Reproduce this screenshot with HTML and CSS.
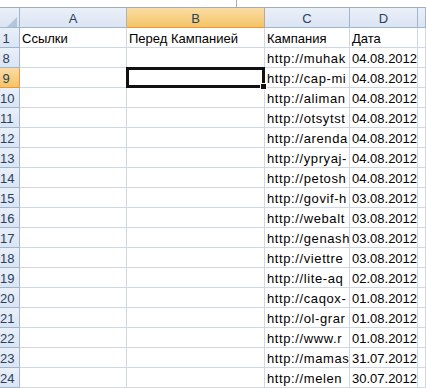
FILE: index.html
```html
<!DOCTYPE html>
<html lang="ru">
<head>
  <meta charset="UTF-8" />
  <title>Лист1</title>
  <link rel="stylesheet" href="styles.css">
</head>
<body>
  <div class="formula-bar"><span class="fx-split"></span></div>

  <div class="sheet">
    <div class="corner"></div>
    <div class="col-head">A</div>
    <div class="col-head active">B</div>
    <div class="col-head">C</div>
    <div class="col-head">D</div>
    <div class="col-head"></div>

    <div class="row-head"><span>1</span></div>
    <div class="cell">Ссылки</div>
    <div class="cell">Перед Кампанией</div>
    <div class="cell">Кампания</div>
    <div class="cell">Дата</div>
    <div class="cell"></div>
  </div>

  <script>
    // only the part of each link that fits in column C is kept
    const rows = [
      [8, "http://muhak", "04.08.2012"],
      [9, "http://cap-mi", "04.08.2012"],
      [10, "http://aliman", "04.08.2012"],
      [11, "http://otsytst", "04.08.2012"],
      [12, "http://arenda", "04.08.2012"],
      [13, "http://ypryaj-", "04.08.2012"],
      [14, "http://petosh", "04.08.2012"],
      [15, "http://govif-h", "03.08.2012"],
      [16, "http://webalt", "03.08.2012"],
      [17, "http://genash", "03.08.2012"],
      [18, "http://viettre", "03.08.2012"],
      [19, "http://lite-aq", "02.08.2012"],
      [20, "http://caqox-", "01.08.2012"],
      [21, "http://ol-grar", "01.08.2012"],
      [22, "http://www.r", "01.08.2012"],
      [23, "http://mamas", "31.07.2012"],
      [24, "http://melen", "30.07.2012"]
    ];

    const sheet = document.querySelector(".sheet");
    rows.forEach(([num, link, date]) => {
      const head = document.createElement("div");
      head.className = num === 9 ? "row-head active" : "row-head";
      head.innerHTML = "<span>" + num + "</span>";
      sheet.appendChild(head);

      const a = document.createElement("div");
      a.className = "cell";
      const b = document.createElement("div");
      b.className = num === 9 ? "cell selected" : "cell";
      const c = document.createElement("div");
      c.className = "cell link";
      c.textContent = link;
      const d = document.createElement("div");
      d.className = "cell num";
      d.textContent = date;
      const e = document.createElement("div");
      e.className = "cell";
      [a, b, c, d, e].forEach(el => sheet.appendChild(el));
    });
  </script>
</body>
</html>
```

FILE: styles.css
```css
body {
  margin: 0;
  padding: 0;
  background-color: #fff;
  font-family: "Liberation Sans", Arial, sans-serif;
  font-size: 13px;
  color: #000;
  overflow: hidden;
}

.formula-bar {
  height: 7px;
  border-bottom: 1px solid #a3adb9;
  background-color: #fff;
  position: relative;
}

.fx-split {
  position: absolute;
  left: 236px;
  top: 0;
  bottom: 0;
  border-left: 1px solid #a3adb9;
}

.sheet {
  display: grid;
  grid-template-columns: 20px 107px 138px 85px 68px 1fr;
  grid-auto-rows: 20px;
}

.sheet > div {
  box-sizing: border-box;
  border-right: 1px solid #d0d7e5;
  border-bottom: 1px solid #d0d7e5;
  white-space: nowrap;
  overflow: hidden;
  line-height: 19px;
  padding-top: 1px;
}

.sheet > .corner,
.sheet > .col-head,
.sheet > .row-head {
  background: linear-gradient(#eaf0f9, #dbe4f2);
  border-right-color: #9eb6ce;
  border-bottom-color: #9eb6ce;
  color: #27415f;
}

.corner {
  position: relative;
}

.corner::after {
  content: "";
  position: absolute;
  left: 4px;
  top: 9px;
  width: 13px;
  height: 13px;
  background-color: #b6c4d8;
  clip-path: polygon(100% 0, 100% 100%, 0 100%);
}

.col-head {
  text-align: center;
}

.row-head {
  padding-right: 7px;
  text-align: center;
}

.sheet > .active {
  background: linear-gradient(#fadca4, #f3c466);
  border-right-color: #f29536;
  border-bottom-color: #f29536;
}

.sheet > .col-head.active {
  border-right-color: #c9a77a;
}

.cell {
  padding: 1px 2px 0;
}

.cell.link {
  letter-spacing: 0.6px;
  text-overflow: clip;
}

.cell.num {
  text-align: right;
  padding-right: 1px;
}

.sheet > .selected {
  position: relative;
  overflow: visible;
}

.selected::after {
  content: "";
  position: absolute;
  top: -1px;
  left: -1px;
  right: -1px;
  bottom: -1px;
  border: 3px solid #111;
}

.selected::before {
  content: "";
  position: absolute;
  right: -3px;
  bottom: -3px;
  width: 5px;
  height: 5px;
  background-color: #111;
  border: 1px solid #fff;
  z-index: 1;
}
```
